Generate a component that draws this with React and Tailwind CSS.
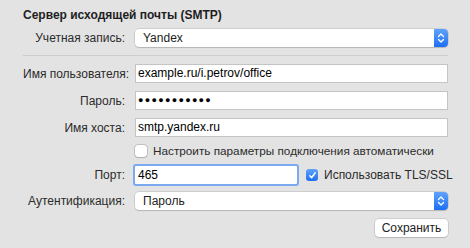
import React from "react";

const font = { fontFamily: '"Liberation Sans", Arial, sans-serif' };

function Stepper() {
  return (
    <div className="w-[14px] h-full rounded-r-[4px] bg-gradient-to-b from-[#5fa2fa] to-[#1a6ef3] flex items-center justify-center">
      <svg width="8" height="12" viewBox="0 0 8 12" fill="none" stroke="white" strokeWidth="1.3" strokeLinecap="round" strokeLinejoin="round">
        <path d="M1.5 4.5 L4 2 L6.5 4.5" />
        <path d="M1.5 7.5 L4 10 L6.5 7.5" />
      </svg>
    </div>
  );
}

function Select({ value }) {
  return (
    <div className="h-[18px] flex bg-white rounded-[4px] shadow-[0_0_0_0.5px_rgba(0,0,0,0.18),0_1px_1px_rgba(0,0,0,0.12)]">
      <div className="flex-1 pl-[8px] text-[12px] leading-[18px] text-[#222] whitespace-nowrap">{value}</div>
      <Stepper />
    </div>
  );
}

function Field({ children }) {
  return (
    <div className="h-[19px] bg-white border border-[#c4c4c4] pl-[2px] text-[12px] leading-[17px] text-black whitespace-nowrap">
      {children}
    </div>
  );
}

function Label({ children }) {
  return <div className="w-[102px] text-right text-[12px] leading-[14px] text-[#2b2b2b] shrink-0 whitespace-nowrap">{children}</div>;
}

function Row({ label, children, className = "" }) {
  return (
    <div className={`flex items-center gap-[10px] ${className}`}>
      <Label>{label}</Label>
      <div className="flex-1">{children}</div>
    </div>
  );
}

export default function App() {
  return (
    <div style={font} className="w-[470px] h-[248px] bg-[#e3e3e3] pl-[23px] pr-[22px] pt-[7px] overflow-hidden">
      <div className="text-[12px] font-bold text-[#1e1e1e] leading-[16px] whitespace-nowrap">Сервер исходящей почты (SMTP)</div>

      <Row label="Учетная запись:" className="mt-[6px]">
        <Select value="Yandex" />
      </Row>

      <div className="h-px bg-[#cdcdcd] mt-[8px]" />

      <Row label="Имя пользователя:" className="mt-[8px]">
        <Field>example.ru/i.petrov/office</Field>
      </Row>
      <Row label="Пароль:" className="mt-[8px]">
        <Field>
          <span className="text-[9px] tracking-[1.3px] leading-[17px] align-top">●●●●●●●●●●●</span>
        </Field>
      </Row>
      <Row label="Имя хоста:" className="mt-[8px]">
        <Field>smtp.yandex.ru</Field>
      </Row>

      <div className="flex items-center gap-[6px] mt-[8px] pl-[112px] h-[12px]">
        <div className="w-[12px] h-[12px] shrink-0 bg-white rounded-[3px] shadow-[0_0_0_0.5px_rgba(0,0,0,0.3),0_1px_1px_rgba(0,0,0,0.1)]" />
        <div className="text-[11.75px] text-[#2b2b2b] leading-[14px] whitespace-nowrap">Настроить параметры подключения автоматически</div>
      </div>

      <div className="flex items-center gap-[10px] mt-[7px]">
        <Label>Порт:</Label>
        <div className="w-[166px] h-[22px] shrink-0 rounded-[3px] border-[2px] border-[#7aa9f0] bg-white ml-[-2px]">
          <div className="pl-[3px] text-[12px] leading-[18px] text-black">465</div>
        </div>
        <div className="flex items-center gap-[6px] ml-[-3px]">
          <div className="w-[12px] h-[12px] shrink-0 rounded-[3px] bg-gradient-to-b from-[#5fa2fa] to-[#1a6ef3] flex items-center justify-center">
            <svg width="9" height="9" viewBox="0 0 9 9" fill="none" stroke="white" strokeWidth="1.5" strokeLinecap="round" strokeLinejoin="round">
              <path d="M1.8 4.8 L3.6 6.8 L7.2 1.8" />
            </svg>
          </div>
          <div className="text-[12px] text-[#2b2b2b] whitespace-nowrap">Использовать TLS/SSL</div>
        </div>
      </div>

      <Row label="Аутентификация:" className="mt-[6px]">
        <Select value="Пароль" />
      </Row>

      <div className="flex justify-end mt-[9px]">
        <div className="w-[73px] h-[18px] bg-white rounded-[4px] shadow-[0_0_0_0.5px_rgba(0,0,0,0.18),0_1px_1px_rgba(0,0,0,0.12)] text-center text-[12px] leading-[18px] text-[#222]">
          Сохранить
        </div>
      </div>
    </div>
  );
}
